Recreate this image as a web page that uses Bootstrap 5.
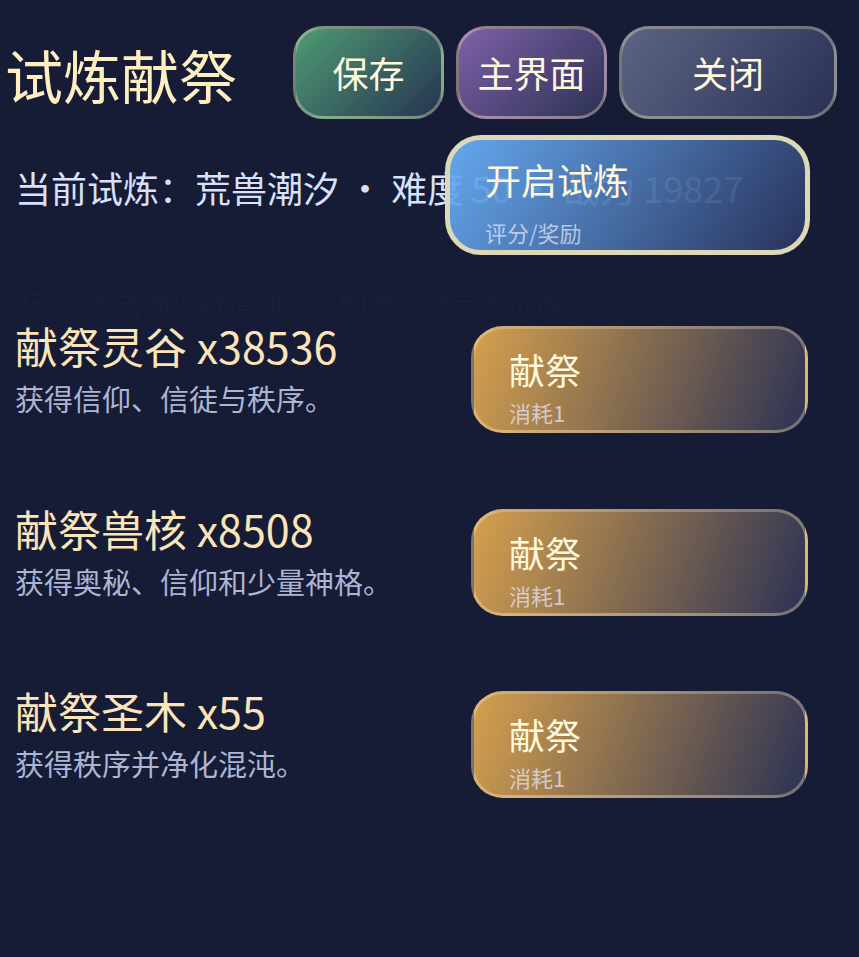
<!DOCTYPE html>
<html lang="zh">
<head>
<meta charset="utf-8">
<title>试炼献祭</title>
<link href="https://cdn.jsdelivr.net/npm/bootstrap@5.3.0/dist/css/bootstrap.min.css" rel="stylesheet">
<style>
html,body{height:100%;margin:0;}
body{background:#161b36;font-family:"Noto Sans CJK SC","Noto Sans",sans-serif;overflow:hidden;}
.stage{position:relative;width:859px;height:957px;overflow:hidden;}
.ghost{position:absolute;inset:0;z-index:0;pointer-events:none;}
.ghost-line{position:absolute;white-space:pre;line-height:1;}
.ghost-a{left:18px;top:290px;font-size:28px;color:#1a1e3b;}
.ghost-b{left:3px;top:834px;font-size:38px;color:#1b1b39;}
.ghost-c{left:20px;top:885px;font-size:30px;color:#191d39;}
.ghost-d{left:2px;top:929px;font-size:24px;color:#191d39;}
.ghost-art{position:absolute;left:230px;top:420px;}
.content{position:relative;z-index:1;}
.top-bar{height:135px;padding:26px 22px 0 5px;}
.page-title{font-size:58px;line-height:96px;margin:0;color:#ffefc0;font-weight:400;width:287px;flex:none;}
.game-btn{border:3px solid rgba(255,235,190,.34);color:#fff8dc;font-size:36px;line-height:1;padding:0 0 1px;display:flex;align-items:center;justify-content:center;flex:none;}
.game-btn:hover,.game-btn:active{color:#fff8dc;}
.pill-save{width:151px;height:93px;border-radius:30px;background:linear-gradient(135deg,#4f9a74,#263451);}
.pill-home{width:151px;height:93px;border-radius:30px;background:linear-gradient(135deg,#7e60a8,#2c3254);}
.pill-close{width:218px;height:93px;border-radius:30px;background:linear-gradient(125deg,#5d6482,#2a3156);}
.top-actions{margin-left:1px;}
.status-zone{position:relative;height:191px;}
.status-text{position:absolute;left:15px;top:26px;margin:0;font-size:36px;line-height:52px;color:#d7e1fb;white-space:pre;}
.start-btn{position:absolute;left:445px;top:0;width:365px;height:120px;border:5px solid #ddd8b8;border-radius:36px;background:linear-gradient(125deg,rgba(106,178,252,.93),rgba(42,52,94,.93));color:#fff8dc;flex-direction:column;align-items:flex-start;justify-content:flex-start;padding:0 0 0 35px;}
.btn-main{font-size:36px;line-height:52px;}
.start-btn .btn-main{margin-top:13px;}
.btn-sub{font-size:22px;line-height:34px;color:rgba(230,230,250,.72);}
.start-btn .btn-sub{margin-top:10px;}
.offer-row{height:182.5px;padding:0 51px 0 15px;}
.offer-name{font-size:43px;line-height:52px;color:#fae4b8;margin:-7px 0 0;font-weight:400;white-space:pre;}
.offer-desc{font-size:29px;line-height:36px;color:#adb5d3;margin:9px 0 0;white-space:pre;}
.offer-btn{width:337px;height:107px;border-radius:32px;background:linear-gradient(110deg,#d5a04d,#2c3254);flex-direction:column;align-items:flex-start;justify-content:flex-start;padding:0 0 0 35px;}
.offer-btn .btn-main{margin-top:14px;}
.offer-btn .btn-sub{margin-top:0;}
</style>
</head>
<body>
<div class="stage">
  <div class="ghost" aria-hidden="true">
    <div class="ghost-line ghost-a">标：  点击神火献信仰，压制混沌并完成试炼</div>
    <div class="ghost-line ghost-b">界：中位真神</div>
    <div class="ghost-line ghost-c">格：上位巨神</div>
    <div class="ghost-line ghost-d">信徒总数 1250 人 信徒增长 890 人 每回合信仰增长 320 点</div>
    <svg class="ghost-art" width="380" height="420" viewBox="0 0 380 420" fill="none" stroke="#1a1b38" stroke-width="3">
      <path d="M20 190C30 70 100 20 190 20s160 50 170 170"/>
      <path d="M15 280c40 70 100 110 175 110s135-40 175-110"/>
      <path d="M110 100l50-30h60l50 30-50 30h-60z"/>
      <path d="M80 310h220M130 360l60-40 60 40"/>
    </svg>
  </div>
  <div class="content">
    <header class="top-bar d-flex align-items-start">
      <h1 class="page-title">试炼献祭</h1>
      <div class="top-actions d-flex gap-2">
        <button type="button" class="btn game-btn pill-save">保存</button>
        <button type="button" class="btn game-btn pill-home ms-1">主界面</button>
        <button type="button" class="btn game-btn pill-close ms-1">关闭</button>
      </div>
    </header>
    <section class="status-zone">
      <p class="status-text">当前试炼：荒兽潮汐 · 难度 50 · 战力 19827</p>
      <button type="button" class="btn game-btn start-btn">
        <span class="btn-main">开启试炼</span>
        <span class="btn-sub">评分/奖励</span>
      </button>
    </section>
    <section>
      <div class="offer-row d-flex justify-content-between align-items-start">
        <div>
          <h2 class="offer-name">献祭灵谷 x38536</h2>
          <p class="offer-desc">获得信仰、信徒与秩序。</p>
        </div>
        <button type="button" class="btn game-btn offer-btn">
          <span class="btn-main">献祭</span>
          <span class="btn-sub">消耗1</span>
        </button>
      </div>
      <div class="offer-row d-flex justify-content-between align-items-start">
        <div>
          <h2 class="offer-name">献祭兽核 x8508</h2>
          <p class="offer-desc">获得奥秘、信仰和少量神格。</p>
        </div>
        <button type="button" class="btn game-btn offer-btn">
          <span class="btn-main">献祭</span>
          <span class="btn-sub">消耗1</span>
        </button>
      </div>
      <div class="offer-row d-flex justify-content-between align-items-start">
        <div>
          <h2 class="offer-name">献祭圣木 x55</h2>
          <p class="offer-desc">获得秩序并净化混沌。</p>
        </div>
        <button type="button" class="btn game-btn offer-btn">
          <span class="btn-main">献祭</span>
          <span class="btn-sub">消耗1</span>
        </button>
      </div>
    </section>
  </div>
</div>
<script src="https://cdn.jsdelivr.net/npm/bootstrap@5.3.0/dist/js/bootstrap.bundle.min.js"></script>
</body>
</html>
